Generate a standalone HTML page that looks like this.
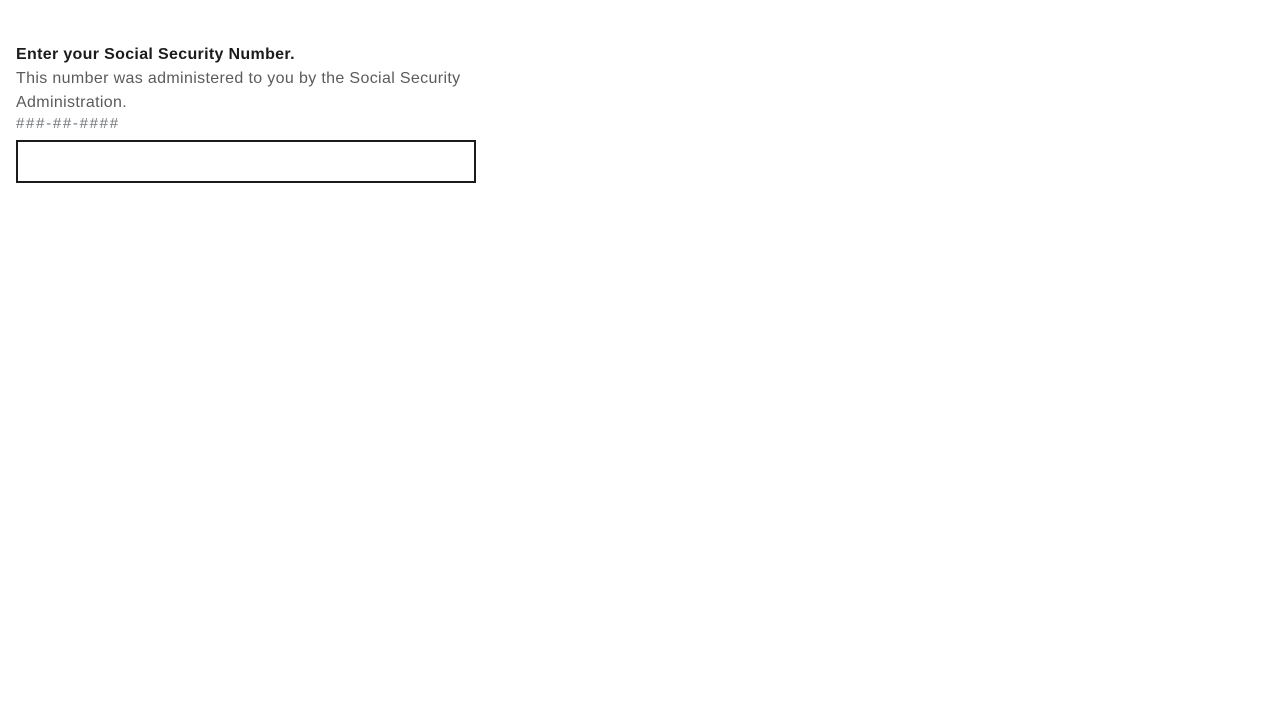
<!DOCTYPE html>
<html><head><style>
body{margin:0;background:#fff;font-family:"Liberation Sans",Arial,sans-serif;}
.t{position:absolute;left:16px;white-space:nowrap;font-size:16px;line-height:24px;}
.b{top:43px;font-weight:bold;color:#1b1b1b;letter-spacing:0.33px;}
.d{top:67px;color:#5b5b5b;letter-spacing:0.35px;}
.h{top:114px;font-size:15px;line-height:20px;color:#71767a;letter-spacing:1.7px;}
.box{position:absolute;left:16px;top:140px;width:456px;height:39px;border:2px solid #1b1b1b;}
</style></head><body>
<div class="t b">Enter your Social Security Number.</div>
<div class="t d">This number was administered to you by the Social Security<br>Administration.</div>
<div class="t h">###-##-####</div>
<div class="box"></div>
</body></html>
